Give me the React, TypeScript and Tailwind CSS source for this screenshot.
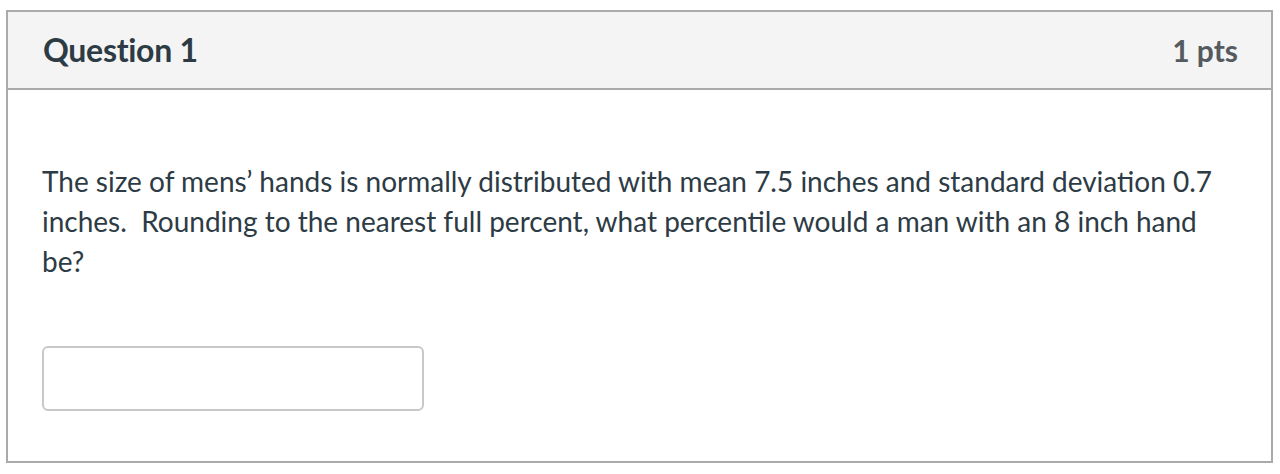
import React from 'react';

export default function App() {
  return (
    <div className="min-h-screen bg-white pl-[6px] pt-[10px] pr-[7px]" style={{ fontFamily: 'Lato, "Open Sans", sans-serif' }}>
      <div className="border-2 border-[#aaaaaa] h-[453px] flex flex-col">
        {/* Header */}
        <div className="h-[78px] bg-[#f4f4f4] border-b-2 border-[#aaaaaa] flex items-center justify-between pl-[35px] pr-[33px]">
          <h2 className="text-[32px] font-bold text-[#2d3b45] tracking-[-0.3px]">Question 1</h2>
          <span className="text-[30px] font-bold text-[#555a5f]">1 pts</span>
        </div>

        {/* Body */}
        <div className="flex-1 pl-[34px] pr-[34px] pt-[71px]">
          <p className="text-[28px] leading-[40px] text-[#2d3b45]">
            The size of mens’ hands is normally distributed with mean 7.5 inches and standard deviation 0.7 inches.&nbsp; Rounding to the nearest full percent, what percentile would a man with an 8 inch hand be?
          </p>
          <input
            type="text"
            className="block mt-[65px] w-[382px] h-[65px] border-2 border-[#c8c8c8] rounded-[6px] bg-white outline-none"
          />
        </div>
      </div>
    </div>
  );
}
